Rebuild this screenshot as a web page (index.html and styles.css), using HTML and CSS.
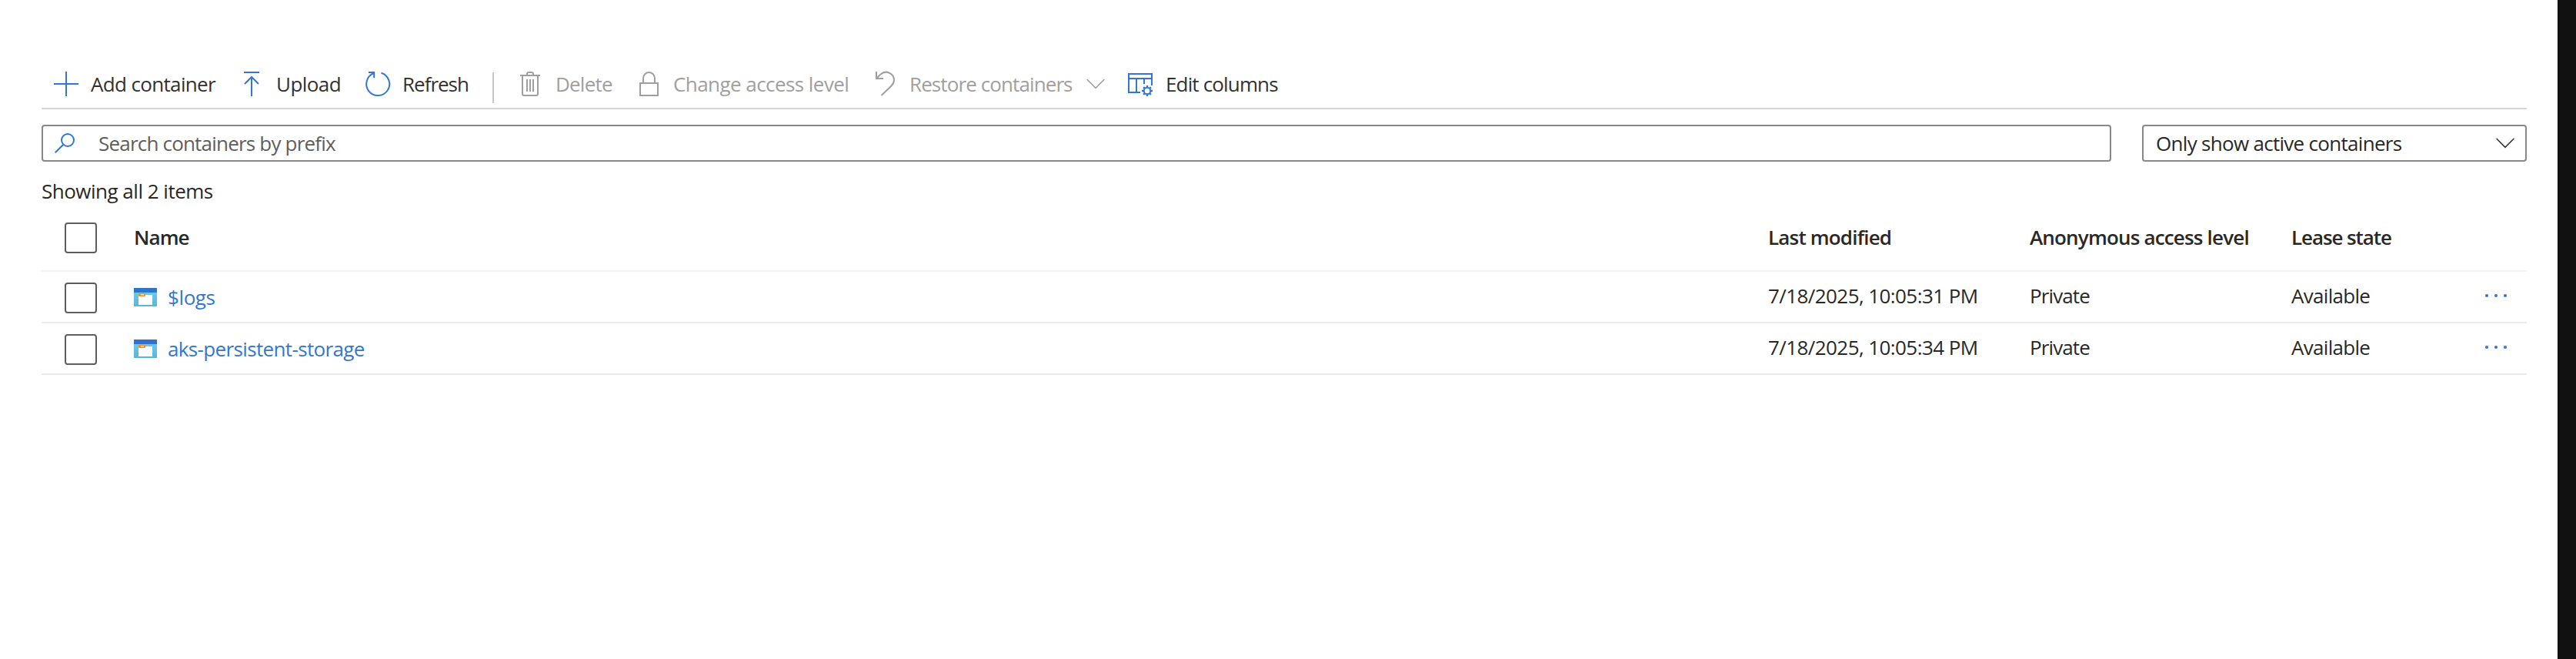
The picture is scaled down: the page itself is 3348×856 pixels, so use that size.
FILE: index.html
```html
<!DOCTYPE html>
<html lang="en">
<head>
<meta charset="utf-8">
<title>Containers</title>
<link rel="stylesheet" href="styles.css">
</head>
<body>
<main class="page">
  <div class="toolbar">
    <button class="cmd cmd-add"><svg width="32" height="32"><path d="M0 16H32M16 0V32"/></svg><span class="t t-add">Add container</span></button>
    <button class="cmd cmd-upload"><svg width="20" height="32"><path d="M0 1H20M10 7V32M1 16L10 7L19 16"/></svg><span class="t t-upload">Upload</span></button>
    <button class="cmd cmd-refresh"><svg width="32" height="32"><path d="M20.500 1.700A15 15 0 1 1 11 2M4 1H11.200V8"/></svg><span class="t t-refresh">Refresh</span></button>
    <span class="divider"></span>
    <button class="cmd cmd-delete off"><svg width="26" height="32"><path d="M0 5H26M3 5V29Q3 31 5 31H21Q23 31 23 29V5M9 5V3Q9 1 11 1H15Q17 1 17 3V5M9 10V26M13 10V26M17 10V26"/></svg><span class="t t-delete">Delete</span></button>
    <button class="cmd cmd-access off"><svg width="26" height="32"><path d="M1 15H24V31H1ZM5 15V8.500A7.500 7.500 0 0 1 20 8.500V15"/></svg><span class="t t-access">Change access level</span></button>
    <button class="cmd cmd-restore off"><svg width="26" height="32"><path d="M1 0V9H10M1.500 8.500L6.500 3.500C14-3 24 3 24 11C24 14.500 22 17 20.500 18.500L7.500 31"/></svg><span class="t t-restore">Restore containers</span><svg class="chev" width="24" height="14"><path d="M.7 1L12 12.300L23.300 1"/></svg></button>
    <button class="cmd cmd-columns"><svg width="34" height="32"><path d="M16 27H1V3H31V18M1 9H31M11 9V27M21 9V16"/><circle cx="25" cy="25" r="4.200"/><path class="cog" d="M25 18V20.500M25 29.500V32M18 25H20.500M29.500 25H32M20.100 20.100L21.800 21.800M28.200 28.200L29.900 29.900M29.900 20.100L28.200 21.800M21.800 28.200L20.100 29.900"/></svg><span class="t t-columns">Edit columns</span></button>
  </div>
  <div class="filters">
    <div class="search"><svg width="26" height="26"><circle cx="17" cy="9" r="8"/><path d="M11.300 14.700L.7 25.300"/></svg><span class="t t-search">Search containers by prefix</span></div>
    <div class="select"><span class="t t-select">Only show active containers</span><svg class="chev" width="24" height="14"><path d="M.7 1L12 12.300L23.300 1"/></svg></div>
  </div>
  <div class="count"><span class="t t-count">Showing all 2 items</span></div>
  <div class="grid">
    <div class="row head">
      <span class="box"></span>
      <span class="t t-name">Name</span>
      <span class="t t-mod">Last modified</span>
      <span class="t t-anon">Anonymous access level</span>
      <span class="t t-lease">Lease state</span>
    </div>
    <div class="row">
      <span class="box"></span>
      <a class="name"><svg class="blob" width="30" height="24"><use href="#container"/></svg><span class="t t-logs">$logs</span></a>
      <span class="t t-date">7/18/2025, 10:05:31 PM</span>
      <span class="t t-private">Private</span>
      <span class="t t-avail">Available</span>
      <svg class="more" width="30" height="6"><circle cx="3" cy="3" r="2.100"/><circle cx="15" cy="3" r="2.100"/><circle cx="27" cy="3" r="2.100"/></svg>
    </div>
    <div class="row">
      <span class="box"></span>
      <a class="name"><svg class="blob" width="30" height="24"><use href="#container"/></svg><span class="t t-aks">aks-persistent-storage</span></a>
      <span class="t t-date">7/18/2025, 10:05:34 PM</span>
      <span class="t t-private">Private</span>
      <span class="t t-avail">Available</span>
      <svg class="more" width="30" height="6"><circle cx="3" cy="3" r="2.100"/><circle cx="15" cy="3" r="2.100"/><circle cx="27" cy="3" r="2.100"/></svg>
    </div>
  </div>
</main>
<svg class="defs" width="0" height="0">
  <defs>
    <linearGradient id="sky" x1="0" y1="0" x2="0" y2="1"><stop offset="0" stop-color="#6ad3f2"/><stop offset="1" stop-color="#5cb4d6"/></linearGradient>
    <g id="container">
      <rect width="30" height="24" rx=".6" fill="url(#sky)"/>
      <rect width="30" height="6" rx=".6" fill="#3073cf"/>
      <path d="M6 9H24V22H6Z" fill="#fff"/>
      <rect x="6" y="7" width="9" height="4" rx="1" fill="#e8913a"/>
      <rect x="9" y="8" width="4" height="1.500" fill="#f9d9b5"/>
    </g>
  </defs>
</svg>
</body>
</html>
```
FILE: styles.css
```css
* { box-sizing: border-box; }
body { margin: 0; background: #fff; color: #292827; font: 26px/36px "Open Sans", "Noto Sans", sans-serif; }
.page { width: 3348px; height: 856px; padding: 76px 40px 0 54px; border-right: 24px solid #111; overflow: hidden; }
svg { flex: none; fill: none; stroke: #3377d0; stroke-width: 2; overflow: visible; }
.defs { position: absolute; }
.t { display: block; white-space: nowrap; flex: none; letter-spacing: -.7px; }

.toolbar { display: flex; height: 66px; padding: 0 0 0 16px; border-bottom: 2px solid #d6d6d6; align-items: flex-start; }
.cmd { display: flex; align-items: center; flex: none; height: 66px; padding: 0; border: 0; background: none; color: #323130; font: inherit; text-align: left; }
.cmd-add { width: 247px; gap: 16px; }
.cmd-upload { width: 158px; gap: 22px; }
.cmd-refresh { width: 165px; gap: 16px; }
.divider { width: 2px; height: 40px; margin: 18px 34px 0 0; background: #c8c6c4; flex: none; }
.cmd-delete { width: 155px; gap: 20px; }
.cmd-access { width: 307px; gap: 18px; }
.cmd-restore { width: 328px; gap: 18px; }
.cmd-restore .chev { margin: 0 32px 0 auto; }
.cmd-columns { gap: 15px; }
.off { color: #a19f9d; }
.off svg { stroke: #a19f9d; }
.chev { stroke-width: 1.6; }
.cog { stroke-width: 2.4; }

.filters { display: grid; grid-template-columns: 2690px 500px; gap: 40px; margin-top: 20px; }
.search, .select { display: flex; align-items: center; height: 48px; border: 2px solid #8a8886; border-radius: 4px; }
.search { padding-left: 15px; gap: 31px; color: #605e5c; }
.select { justify-content: space-between; padding: 0 14px 0 16px; }
.select .chev { stroke: #323130; }
.count { height: 69px; padding-top: 20px; }

.row { display: grid; grid-template-columns: 90px 2124px 340px 340px 251px 1fr; align-items: center; height: 67px; padding-left: 30px; border-bottom: 2px solid #edebe9; }
.row > .t, .more { margin-bottom: 3px; }
.head { height: 74px; padding-bottom: 12px; border-color: #f3f2f1; font-weight: 600; }
.box { width: 42px; height: 40px; border: 2px solid #605e5c; border-radius: 4px; }
.row:not(.head) .box { margin-top: 2px; }
.name { display: flex; align-items: center; gap: 14px; color: #3377d0; }
.blob { stroke: none; }
.more { fill: #3377d0; stroke: none; }

/* Tracking per label */
.t-add { letter-spacing: -.65px; }
.t-upload { letter-spacing: -.55px; }
.t-refresh { letter-spacing: -1px; }
.t-delete { letter-spacing: -.8px; }
.t-access { letter-spacing: -.56px; }
.t-restore { letter-spacing: -.9px; }
.t-columns { letter-spacing: -.85px; }
.t-search { letter-spacing: -.8px; }
.t-count { letter-spacing: -.5px; }
.t-name { letter-spacing: -.9px; }
.t-mod, .t-anon { letter-spacing: -.82px; }
.t-lease { letter-spacing: -1.1px; }
.t-logs { letter-spacing: -.4px; }
.t-aks { letter-spacing: -.64px; }
.t-date { letter-spacing: -.58px; }
.t-private { letter-spacing: -.9px; }
```
